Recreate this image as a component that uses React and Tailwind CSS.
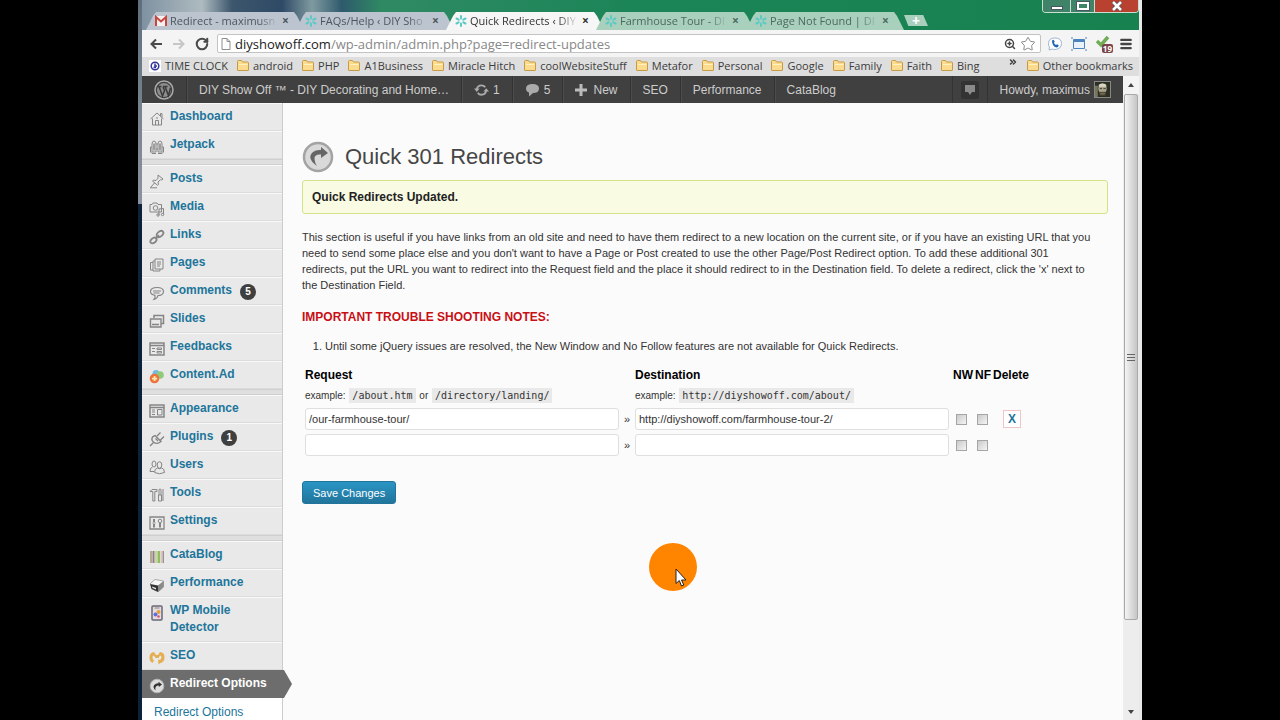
import React, { useState } from "react";
import { ChevronsRight, Menu, RotateCw, Star, ZoomIn } from "lucide-react";

const TABS = [
  { title: "Redirect - maximusn", icon: "gmail" },
  { title: "FAQs/Help ‹ DIY Sho", icon: "flower" },
  { title: "Quick Redirects ‹ DIY", icon: "flower", active: true },
  { title: "Farmhouse Tour - DI", icon: "flower", green: true },
  { title: "Page Not Found | DI", icon: "flower", green: true },
];

const BOOKMARKS = [
  "android", "PHP", "A1Business", "Miracle Hitch", "coolWebsiteStuff",
  "Metafor", "Personal", "Google", "Family", "Faith", "Bing",
];

const MENU = [
  [
    { label: "Dashboard", icon: "home" },
    { label: "Jetpack", icon: "jetpack" },
  ],
  [
    { label: "Posts", icon: "pin" },
    { label: "Media", icon: "media" },
    { label: "Links", icon: "link" },
    { label: "Pages", icon: "pages" },
    { label: "Comments", icon: "comment", count: 5 },
    { label: "Slides", icon: "slides" },
    { label: "Feedbacks", icon: "form" },
    { label: "Content.Ad", icon: "contentad" },
  ],
  [
    { label: "Appearance", icon: "appearance" },
    { label: "Plugins", icon: "plug", count: 1 },
    { label: "Users", icon: "users" },
    { label: "Tools", icon: "tools" },
    { label: "Settings", icon: "settings" },
  ],
  [
    { label: "CataBlog", icon: "catablog" },
    { label: "Performance", icon: "cube" },
    { label: "WP Mobile Detector", icon: "mobile" },
    { label: "SEO", icon: "seo" },
    { label: "Redirect Options", icon: "redirect", current: true },
  ],
];

const ICONS = {
  home: (
    <>
      <path d="M1.500 8 8 2l6.500 6M3.500 7.500V14h9V7.500M11.500 5V2.500h1.500V6.500" />
      <path d="M6.500 14v-4.500h3V14M7 7h2" />
    </>
  ),
  jetpack: (
    <>
      <path d="M3 13V5q0-3 2-3t2 3v8zM9 13V5q0-3 2-3t2 3v8zM7 5h2M7 10h2" />
      <path d="M3 8H1.500v5L3 14.500h4M13 8h1.500v5L13 14.500H9" />
      <path d="M5 4.500v7M11 4.500v7" strokeWidth="1.500" />
    </>
  ),
  pin: (
    <>
      <path d="m9 2 5 4-1.500 1-1-.3-2.500 2.300.5 2.500-1 .8-5-4.300 1-.8 2.500.3L9 5.300z" />
      <path d="M5.500 10 1.500 14.500M1 14.800h7" />
    </>
  ),
  media: (
    <>
      <path d="M1 3.500h2l1-1.500h4l1 1.500h3.500V11H1z" />
      <circle cx="6.500" cy="7" r="2.300" />
      <path d="M10 14V8l4.500-.5v6" />
      <circle cx="9" cy="14" r="1.200" />
      <circle cx="13.500" cy="13.500" r="1.200" />
    </>
  ),
  link: (
    <>
      <ellipse cx="11" cy="5" rx="3.800" ry="2.500" transform="rotate(-40 11 5)" strokeWidth="1.800" />
      <ellipse cx="4.500" cy="11.500" rx="3.500" ry="2.300" transform="rotate(-40 4.500 11.500)" strokeWidth="1.800" />
      <path d="m6 10 4-4" strokeWidth="1.500" />
    </>
  ),
  pages: (
    <>
      <path d="M6 2h8v10H6z" />
      <path d="M6 4H4v10h7v-2M4 5.500H1.500V13H4M8 5h4M8 7h4M8 9h3" />
    </>
  ),
  comment: (
    <>
      <path d="M8 2.500c4 0 6.500 1.600 6.500 4s-2.500 4-5.500 4q-.5 3-4 3.800 1.500-1.800 1-4C3 9.800 1.500 8.500 1.500 6.500c0-2.400 2.500-4 6.500-4z" strokeWidth="1.200" />
      <path d="M4 6h8M4.500 8h6" />
    </>
  ),
  slides: (
    <>
      <path d="M5 5V2.500h9.500v8H12" strokeWidth="1.500" />
      <path d="M1.500 6H12v8H1.500zM3 11.500h7" strokeWidth="1.400" />
    </>
  ),
  form: (
    <>
      <path d="M1 2h14v12H1zM1 4.500h14" strokeWidth="1.500" />
      <path d="M3 7.500h3M3 10.500h3M8 7h4.500v1.500H8zM8 10.500h4.500v1.500H8z" />
    </>
  ),
  contentad: (
    <g stroke="none">
      <circle cx="7" cy="4.500" r="3.500" fill="#6fbbe6" />
      <circle cx="11" cy="6" r="3.800" fill="#8fca7b" />
      <circle cx="5.500" cy="9.500" r="4.800" fill="#ee7240" />
      <path d="M4.700 7h1.800v1.700h1.700v1.700H6.500V12H4.700v-1.600H3V8.700h1.700z" fill="#ffe9a8" />
    </g>
  ),
  appearance: (
    <>
      <path d="M1 2h14v12H1zM1 4.500h14" strokeWidth="1.500" />
      <path d="M8.500 6.500h4.500v5.500H8.500zM3 7h3M3 9h3M3 11.500h3" />
    </>
  ),
  plug: (
    <>
      <path d="m6 4.500 6 6-1.500 1q-3 2-6-.5t-.5-5.500zM8 5l3.500-3.500M11.500 9 15 5.500" strokeWidth="1.400" />
      <path d="M4.500 11.500 1 15M6.500 7.500l2.500 2.500" strokeWidth="1.400" />
    </>
  ),
  users: (
    <>
      <ellipse cx="5" cy="5" rx="2" ry="3" />
      <path d="M3.500 8Q1 8.500 1 12.500h4" />
      <ellipse cx="10.500" cy="6" rx="2.300" ry="3.300" />
      <path d="M5.500 13.500q0-4 3-4.500 2 1.500 4 0 3 .5 3 4.500-5 2.500-10 0z" />
    </>
  ),
  tools: (
    <>
      <path d="M1 4.500 3 2.500h5v2H5.800V14H3.800V4.500zM10 8V3q0-1 1-1t1 1v5M9.500 8h3v6h-3zM14 2v12" />
    </>
  ),
  settings: (
    <>
      <path d="M1 2h14v12H1z" strokeWidth="1.300" />
      <path d="M5 4v3M5 9v3.500M11 8v4.500" strokeWidth="2" />
      <path d="M3.500 8h3" />
      <circle cx="11" cy="6" r="1.800" />
    </>
  ),
  catablog: (
    <g stroke="none">
      <path d="M1 2h2v12H1z" fill="#b8a98c" />
      <path d="M3.500 2h2v12h-2z" fill="#8d7d8d" />
      <path d="M6 2h2v12H6z" fill="#cdd59c" />
      <path d="M8.500 2H11v12H8.500z" fill="#8fbe5e" />
      <path d="M11.500 2h1.500v12h-1.500z" fill="#d8c7bb" />
      <path d="M13.500 2H15v12h-1.500z" fill="#a38f8f" />
    </g>
  ),
  cube: (
    <g stroke="none">
      <path d="M1 7 6 2.500 14.500 4 9 8.500z" fill="#f8f8f8" />
      <path d="M1 7 9 8.500V15L2.500 12z" fill="#333" />
      <path d="M9 8.500 14.500 4v6L9 15z" fill="#8a8a8a" />
      <path d="M3 9.500 7 11v1.500L3.500 11z" fill="#eee" />
      <path d="M1 7 6 2.500 14.500 4v6L9 15" fill="none" stroke="#888" strokeWidth=".7" />
    </g>
  ),
  mobile: (
    <>
      <rect x="3" y="1" width="10" height="14" rx="1" fill="#e8dbe0" stroke="#686878" strokeWidth="1.500" />
      <path d="M5.500 3h5" />
      <circle cx="9.500" cy="7" r="2" fill="#e2a33f" stroke="none" />
      <circle cx="6.500" cy="9.500" r="2" fill="#5c6ee0" stroke="none" />
      <circle cx="9.500" cy="11.500" r="1.300" fill="#d05c68" stroke="none" />
    </>
  ),
  seo: (
    <path
      d="M5 2Q.5 2.500.5 7.500q0 4 3 5.500l1.500-2.500Q3.200 9 3.500 7q.2-1.500 1.500-1.500l1.500 2.500h3L11 5.500q1.500 0 1.500 1.800 0 2-2 2.700L9 9.500l.5 5 1.500-1.300q4.500-1 4.500-6Q15.500 2.500 11 2L9 5H7z"
      fill="#e5ae52"
      stroke="none"
    />
  ),
  redirect: (
    <>
      <circle cx="8" cy="8" r="6.800" fill="#ddd" stroke="#b8b8b8" />
      <path d="M6.500 12.500Q2.500 8 6.500 6q1.500-.8 3-.6V3.800L13 6.500 9.800 9V7.500Q5.500 7.500 6.500 12.500z" fill="#333" stroke="none" />
    </>
  ),
};

function MenuIcon({ name }) {
  return (
    <svg viewBox="0 0 16 16" className="mt-[3px] -mb-0.5 h-4 w-4 shrink-0" fill="none" stroke="#858585" strokeWidth="1">
      {ICONS[name]}
    </svg>
  );
}

function FavIcon({ name }) {
  if (name === "gmail") {
    return (
      <svg viewBox="0 0 14 12" className="h-3 w-3.5 shrink-0">
        <path d="M1 1h12v10H1z" fill="#f4f1f1" />
        <path d="M2 11V2l5 4.500L12 2v9" fill="none" stroke="#c9453f" strokeWidth="2" />
      </svg>
    );
  }
  return (
    <svg viewBox="0 0 14 14" className="h-3.5 w-3.5 shrink-0" stroke="#5cc9c4" strokeWidth="2" strokeLinecap="round">
      <path d="M7 2v2.500M7 9.500V12M2.500 4.500l2.200 1.200M9.300 8.300l2.200 1.200M2.500 9.500l2.200-1.200M9.300 5.700l2.200-1.200" />
    </svg>
  );
}

function Folder() {
  return (
    <svg viewBox="0 0 12 11" className="h-[11px] w-3 shrink-0" stroke="#c79a45" fill="#fbdc8f">
      <path d="M.5 10V1.500Q.5.500 1.500.5h3l1 1.500h5q1 0 1 1V10q0 .5-.5.500H1Q.5 10.500.5 10z" />
      <path d="M2 4.500h8.500" stroke="#fff0c0" />
    </svg>
  );
}

function Tab({ tab }) {
  let color = "bg-[#bcc5cf] text-[#4d555c]";
  if (tab.green) color = "bg-[#a9cfbd] text-[#4c6a60]";
  if (tab.active) color = "bg-[#f6f6f6] text-[#333]";
  return (
    <div
      className={`flex h-[18px] w-[158px] shrink-0 items-center pl-2 pr-3 -mr-2 [clip-path:polygon(0_100%,7px_4px,10px_0,148px_0,151px_4px,100%_100%)] ${color}`}
    >
      <FavIcon name={tab.icon} />
      <button className="ml-0.5 w-[108px] whitespace-nowrap text-left text-[11px] leading-[18px] [mask-image:linear-gradient(to_right,#000_82%,transparent)]">
        {tab.title}
      </button>
      <button aria-label="Close tab" className="ml-1 text-xs font-bold leading-4">×</button>
    </div>
  );
}

function WindowControls() {
  return (
    <div className="ml-auto flex h-[13px] shrink-0 self-start overflow-hidden rounded-b border border-t-0 border-[#c9ddd3]">
      <button aria-label="Minimize" className="flex w-7 items-center justify-center border-r border-[#c9ddd3] bg-[#3f8468]">
        <span className="mt-1 h-1 w-3 border border-gray-600 bg-white" />
      </button>
      <button aria-label="Maximize" className="flex w-6 items-center justify-center border-r border-[#c9ddd3] bg-[#3f8468]">
        <span className="h-2 w-3 border-2 border-white outline outline-gray-600" />
      </button>
      <button aria-label="Close window" className="flex w-[43px] items-center justify-center bg-[#b9412f]">
        <svg viewBox="0 0 12 10" className="h-2.5 w-3">
          <path d="m2 1 8 8M10 1 2 9" stroke="#555" strokeWidth="4" />
          <path d="m2 1 8 8M10 1 2 9" stroke="#fff" strokeWidth="2.500" />
        </svg>
      </button>
    </div>
  );
}

function TabStrip() {
  return (
    <div className="flex h-[30px] shrink-0 items-end overflow-hidden bg-[linear-gradient(90deg,#7f92a2_0,#aebbc0_60px,#3c566c_90px,#2f4a66_140px,#7f9aa0_170px,#2e5a6c_200px,#2f8a63_240px,#1c8558_480px,#17814f_100%)] pl-1">
      {TABS.map((tab) => (
        <Tab key={tab.title} tab={tab} />
      ))}
      <button
        aria-label="New tab"
        className="mb-1 ml-2 h-[11px] w-6 bg-[#a9cfbd] text-sm font-bold leading-[10px] text-white [clip-path:polygon(0_0,80%_0,100%_100%,18%_100%)]"
      >
        +
      </button>
      <WindowControls />
    </div>
  );
}

function Toolbar() {
  return (
    <div className="flex h-[27px] shrink-0 items-center bg-[#f4f4f4] pl-2 pr-1.5">
      <button aria-label="Back">
        <svg viewBox="0 0 12 12" className="h-3 w-3" fill="none" stroke="#4a4a4a" strokeWidth="2">
          <path d="M12 6H1.500M6 1.500 1.500 6 6 10.500" />
        </svg>
      </button>
      <button aria-label="Forward" className="ml-[11px]">
        <svg viewBox="0 0 12 12" className="h-3 w-3" fill="none" stroke="#c6c6c6" strokeWidth="2">
          <path d="M0 6h10.500M6 1.500 10.500 6 6 10.500" />
        </svg>
      </button>
      <button aria-label="Reload" className="ml-2.5">
        <RotateCw className="h-3.5 w-3.5 text-[#4a4a4a]" strokeWidth={3.5} />
      </button>
      <div className="ml-2 flex h-[19px] min-w-0 flex-1 items-center rounded-xs border border-[#c3c3c3] bg-white pl-[3px] pr-1">
        <svg viewBox="0 0 10 12" className="h-3 w-2.5 shrink-0" fill="none" stroke="#8d8d8d">
          <path d="M1 .5h5L9 3.500v8H1zM6 .5v3h3" />
        </svg>
        <div className="ml-1 flex-1 whitespace-nowrap text-[13px] leading-4 text-[#888]">
          <span className="text-[#222]">diyshowoff.com</span>/wp-admin/admin.php?page=redirect-updates
        </div>
        <ZoomIn className="h-3 w-3 text-[#444]" strokeWidth={3} />
        <Star className="ml-1 h-4 w-4 text-[#888]" strokeWidth={1.5} />
      </div>
      <button aria-label="Call" className="ml-1.5">
        <svg viewBox="0 0 16 14" className="h-3.5 w-4">
          <path d="M8 1q6.500 0 6.500 5.500T8 12.500q-1.500 0-2.500-.5L2 13l.5-3Q1 8.500 1.500 6.500 1.500 1 8 1z" fill="#fff" stroke="#9fb8d2" />
          <path d="m5 3.500 1.500-.8 1.300 2-.9 1q.5 1.500 2.100 2.200l1-.7 1.800 1.300q-.7 2-2.300 2Q5 9.500 5 3.500z" fill="#2264b5" />
        </svg>
      </button>
      <button aria-label="Capture" className="ml-2">
        <svg viewBox="0 0 16 14" className="h-3.5 w-4" fill="none" stroke="#4c83bd">
          <path d="M2.500 2.500h11v9h-11z" fill="#e9f1fa" />
          <path d="M2.500 4h11" strokeWidth="2" />
          <path d="M0 1h2M14 1h2M0 13h2M14 13h2" />
        </svg>
      </button>
      <button aria-label="Checker, 19 items" className="relative ml-2 h-[18px] w-[18px]">
        <svg viewBox="0 0 18 18" className="h-[18px] w-[18px]">
          <path d="m2 6 4 4 7-8" fill="none" stroke="#72ad55" strokeWidth="3.500" />
        </svg>
        <span className="absolute bottom-0 right-0 rounded-xs bg-[#7a4548] px-px text-[8px] font-bold leading-[9px] text-white">19</span>
      </button>
      <button aria-label="Menu" className="ml-1.5">
        <Menu className="h-3.5 w-3.5 text-[#444]" strokeWidth={4} />
      </button>
    </div>
  );
}

function BookmarksBar() {
  return (
    <nav className="flex h-[19px] shrink-0 items-center gap-[9px] whitespace-nowrap bg-[#dedede] pb-0.5 pl-[7px] pr-1.5 text-[11px] leading-4 text-[#3c3c3c]">
      <a href="#clock" className="flex items-center gap-1">
        <span className="flex h-3 w-3 items-center justify-center bg-white">
          <svg viewBox="0 0 10 10" className="h-2.5 w-2.5" fill="none" stroke="#35379c" strokeWidth="1.500">
            <circle cx="5" cy="5" r="3.800" />
            <path d="M5 2.500V5h2M3.500 6.500H6" />
          </svg>
        </span>
        TIME CLOCK
      </a>
      {BOOKMARKS.map((name) => (
        <a key={name} href="#bookmark" className="flex items-center gap-1">
          <Folder />
          {name}
        </a>
      ))}
      <button aria-label="More bookmarks" className="ml-auto self-start">
        <ChevronsRight className="h-2.5 w-2.5" strokeWidth={3.5} />
      </button>
      <a href="#other" className="flex items-center gap-1">
        <Folder />
        Other bookmarks
      </a>
    </nav>
  );
}

function AdminBar() {
  const cell = "flex h-full items-center px-3 border-r border-[#333] shadow-[1px_0_0_#4c4c4c]";
  return (
    <header className="flex h-[27px] shrink-0 items-center whitespace-nowrap bg-[#404040] text-xs leading-4 text-[#ccc]">
      <a href="#wp" aria-label="WordPress" className={cell}>
        <svg viewBox="0 0 20 20" className="h-5 w-5" fill="none" stroke="#aaa">
          <circle cx="10" cy="10" r="9" strokeWidth="1.500" />
          <circle cx="10" cy="10" r="7" fill="#8d8d8d" stroke="none" />
          <path d="M3.500 6.500h4M9 6.500h4.500M5.200 7l3.300 9 2-5.500L9 7M11.200 7l3.300 8.500L16.500 8" stroke="#3a3a3a" strokeWidth="1.500" />
        </svg>
      </a>
      <a href="#site" className={cell}>DIY Show Off ™ - DIY Decorating and Home…</a>
      <a href="#updates" className={`${cell} gap-1`}>
        <svg viewBox="0 0 16 14" className="h-3.5 w-[15px]" fill="none" stroke="#aaa" strokeWidth="2">
          <path d="M3 6q.8-4 5-4 2.500 0 4 2M13 8q-.8 4-5 4-2.500 0-4-2" />
          <path d="M0 5.500h6L3 9zM16 8.500h-6L13 5z" fill="#aaa" stroke="none" />
        </svg>
        1
      </a>
      <a href="#comments" className={`${cell} gap-1`}>
        <svg viewBox="0 0 15 14" className="h-3.5 w-[15px]" fill="#aaa">
          <path d="M7.500 1Q14 1 14 5.500T8 10L4 13.500V9.500Q1 8.500 1 5.500 1 1 7.500 1z" />
        </svg>
        5
      </a>
      <a href="#new" className={`${cell} gap-1.5`}>
        <svg viewBox="0 0 12 12" className="h-3 w-3" stroke="#bbb" strokeWidth="3">
          <path d="M6 0v12M0 6h12" />
        </svg>
        New
      </a>
      <a href="#seo" className={cell}>SEO</a>
      <a href="#performance" className={cell}>Performance</a>
      <a href="#catablog" className="px-3">CataBlog</a>
      <a href="#notes" aria-label="Notifications" className="ml-auto flex h-full items-center border-x border-[#333] px-2">
        <span className="flex h-[18px] w-[18px] items-center justify-center rounded-xs bg-[#333]">
          <svg viewBox="0 0 12 12" className="h-3 w-3" fill="#8a8a8a">
            <path d="M1 1h10v7H8l-2 3-2-3H1z" />
          </svg>
        </span>
      </a>
      <a href="#profile" className="flex items-center gap-1 px-3">
        Howdy, maximus
        <svg viewBox="0 0 16 16" className="h-[17px] w-[17px] border border-[#888]">
          <path d="M0 0h16v16H0z" fill="#2d2f22" />
          <path d="M0 4h3v12H0z" fill="#74775e" />
          <ellipse cx="8" cy="7" rx="4.500" ry="5.500" fill="#aaa48f" />
          <path d="M4 3q4-3 8 0v2H4z" fill="#d9d7c8" />
          <path d="M5 7h2.500M9 7h2.500M5 11h6v3H5z" stroke="#45412f" fill="#716a55" />
        </svg>
      </a>
    </header>
  );
}

function MenuItem({ item }) {
  const look = item.current
    ? "bg-[#6d6d6d] border-y-[#6d6d6d] text-white"
    : "border-t-[#f9f9f9] border-b-[#dcdcdc] text-[#21759b]";
  return (
    <a href="#menu" className={`relative flex gap-[5px] border-y pt-1 pb-[5px] pl-[7px] text-xs font-bold leading-[17px] ${look}`}>
      <MenuIcon name={item.icon} />
      <span className={item.icon === "mobile" ? "max-w-20" : ""}>{item.label}</span>
      {item.count && (
        <span className="ml-[3px] mt-0.5 -mb-1 h-4 w-4 rounded-full bg-[#3f3f3f] text-center text-[10px] leading-4 text-white">
          {item.count}
        </span>
      )}
      {item.current && (
        <span className="absolute -right-2.5 -top-px -bottom-px z-10 w-2.5 bg-[#6d6d6d] [clip-path:polygon(0_0,20%_0,100%_50%,20%_100%,0_100%)]" />
      )}
    </a>
  );
}

function Sidebar() {
  return (
    <aside className="relative z-10 w-[141px] shrink-0 border-r border-[#ccc] bg-[#e9e9e9]">
      {MENU.map((group, i) => (
        <React.Fragment key={i}>
          {i > 0 && <div className="h-1.5 border-y border-[#cfcfcf] bg-[#dfdfdf]" />}
          {group.map((item) => (
            <MenuItem key={item.label} item={item} />
          ))}
        </React.Fragment>
      ))}
      <div className="bg-white pb-1 pl-3 pt-1.5 text-xs leading-4">
        <a href="#redirect-options" className="text-[#21759b]">Redirect Options</a>
      </div>
    </aside>
  );
}

function TextField({ label, value, onChange }) {
  return (
    <input
      type="text"
      aria-label={label}
      value={value}
      onChange={onChange}
      className="block h-[22px] w-full rounded-[3px] border border-[#dfdfdf] bg-white px-[3px] text-[11px] leading-4 text-[#333]"
    />
  );
}

function Check({ label }) {
  return (
    <input
      type="checkbox"
      aria-label={label}
      className="block h-[11px] w-[11px] appearance-none border border-[#a5a5a5] bg-linear-to-br from-[#c9c9c9] to-[#f5f5f5]"
    />
  );
}

function Code({ children }) {
  return <code className="mx-px bg-[#e9e9e9] px-[3px] py-0.5 font-['DejaVu_Sans_Mono',monospace]">{children}</code>;
}

function RedirectTable() {
  const [rows, setRows] = useState([
    { request: "/our-farmhouse-tour/", destination: "http://diyshowoff.com/farmhouse-tour-2/" },
    { request: "", destination: "" },
  ]);

  const update = (index, key, value) =>
    setRows(rows.map((row, i) => (i === index ? { ...row, [key]: value } : row)));

  return (
    <table className="mt-[13px] text-left text-[11px] leading-4">
      <thead>
        <tr className="text-xs leading-4 text-black">
          <th className="w-80 px-[3px] pb-[5px]">Request</th>
          <th className="w-[10px]" />
          <th className="w-80 px-[3px] pb-[5px]">Destination</th>
          <th className="w-5 pb-[5px] pl-px">NW</th>
          <th className="w-5 pb-[5px] pl-0.5">NF</th>
          <th className="w-10 pb-[5px]">Delete</th>
        </tr>
        <tr className="text-[10px]">
          <td className="px-[3px] pb-0.5">
            example: <Code>/about.htm</Code> or <Code>/directory/landing/</Code>
          </td>
          <td />
          <td className="px-[3px] pb-0.5" colSpan={4}>
            example: <Code>http://diyshowoff.com/about/</Code>
          </td>
        </tr>
      </thead>
      <tbody>
        {rows.map((row, i) => (
          <tr key={i}>
            <td className="px-[3px] py-0.5">
              <TextField label="Request" value={row.request} onChange={(e) => update(i, "request", e.target.value)} />
            </td>
            <td className="text-center">»</td>
            <td className="px-[3px] py-0.5">
              <TextField label="Destination" value={row.destination} onChange={(e) => update(i, "destination", e.target.value)} />
            </td>
            <td className="pl-1"><Check label="New window" /></td>
            <td className="pl-1"><Check label="No follow" /></td>
            <td className="pl-[10px]">
              {row.request && (
                <button
                  onClick={() => setRows(rows.filter((_, n) => n !== i))}
                  className="block h-[18px] w-[18px] border border-[#efc5c5] bg-white text-center text-xs font-bold leading-4 text-[#21759b]"
                >
                  X
                </button>
              )}
            </td>
          </tr>
        ))}
      </tbody>
    </table>
  );
}

function Pointer() {
  return (
    <div className="pointer-events-none absolute left-[366px] top-[440px] h-12 w-12 rounded-full bg-[#ff8400]">
      <svg viewBox="0 0 12 19" className="absolute left-[26px] top-[25px] h-[19px] w-3">
        <path d="M1 1v14.500l3.300-3L6.500 18l2.300-1-2.300-5H11z" fill="#fff" stroke="#222" />
      </svg>
    </div>
  );
}

function Content() {
  return (
    <main className="relative min-w-0 flex-1 overflow-hidden bg-[#fcfbfc] pl-[19px] pr-[15px] pt-[38px] text-[11px] leading-4 text-[#333]">
      <div className="flex items-center gap-[11px]">
        <svg viewBox="0 0 32 32" className="h-8 w-8">
          <circle cx="16" cy="16" r="14" fill="#d9d9d9" stroke="#a3a3a3" strokeWidth="2.500" />
          <path d="M15 25Q4 17 11 11q3-2.500 8-2V6l7 6-7 5v-3.500Q12 13 12.500 18q.3 4 2.500 7z" fill="#666" />
        </svg>
        <h1 className="text-[22px] leading-8 text-[#464646]">Quick 301 Redirects</h1>
      </div>
      <div className="mt-[7px] rounded-[3px] border border-[#d5e28a] bg-[#f9fbe3] px-[9px] py-2 text-xs font-bold leading-4 text-[#222]">
        Quick Redirects Updated.
      </div>
      <p className="mt-[15px]">
        This section is useful if you have links from an old site and need to have them redirect to a new location on
        the current site, or if you have an existing URL that you
        <br />
        need to send some place else and you don't want to have a Page or Post created to use the other Page/Post
        Redirect option. To add these additional 301
        <br />
        redirects, put the URL you want to redirect into the Request field and the place it should redirect to in the
        Destination field. To delete a redirect, click the 'x' next to
        <br />
        the Destination Field.
      </p>
      <h2 className="mt-4 text-xs font-bold leading-4 text-[#c80f14]">IMPORTANT TROUBLE SHOOTING NOTES:</h2>
      <ol className="mt-[13px] list-decimal pl-[23px]">
        <li>Until some jQuery issues are resolved, the New Window and No Follow features are not available for Quick Redirects.</li>
      </ol>
      <RedirectTable />
      <button className="mt-[23px] h-[23px] rounded-[3px] border border-[#21759b] bg-linear-to-b from-[#2a95c5] to-[#21759b] px-2.5 leading-4 text-white">
        Save Changes
      </button>
      <Pointer />
    </main>
  );
}

function Scrollbar() {
  return (
    <div aria-hidden="true" className="flex w-4 shrink-0 flex-col items-center bg-[#ededed]">
      <div className="flex h-[18px] w-full items-center justify-center bg-[#f4f4f4]">
        <span className="border-x-3 border-b-4 border-x-transparent border-b-[#444]" />
      </div>
      <div className="flex w-3.5 flex-[526] flex-col items-center justify-center gap-0.5 rounded-xs border border-[#a9a9a9] bg-linear-to-r from-[#f3f3f3] to-[#c6c6c6]">
        <span className="h-px w-2 bg-[#666]" />
        <span className="h-px w-2 bg-[#666]" />
        <span className="h-px w-2 bg-[#666]" />
      </div>
      <div className="flex w-full flex-[94] items-end justify-center pb-1.5">
        <span className="border-x-3 border-t-4 border-x-transparent border-t-[#444]" />
      </div>
    </div>
  );
}

export default function App() {
  return (
    <div className="h-screen overflow-hidden bg-black px-[138px] font-['Liberation_Sans',Arial,sans-serif]">
      <div className="flex h-full bg-[#f3f3f3]">
        <div className="flex w-1 shrink-0 flex-col">
          <div className="h-[204px] bg-linear-to-b from-[#5f6e7c] to-[#8b949e]" />
          <div className="flex-1 bg-[#0d2138]" />
        </div>
        <div className="flex min-w-0 flex-1 flex-col">
          <div className="font-['Open_Sans','Noto_Sans',sans-serif]">
            <TabStrip />
            <Toolbar />
            <BookmarksBar />
          </div>
          <div className="flex min-h-0 flex-1">
            <div className="flex min-w-0 flex-1 flex-col">
              <AdminBar />
              <div className="flex min-h-0 flex-1">
                <Sidebar />
                <Content />
              </div>
            </div>
            <Scrollbar />
          </div>
        </div>
        <div className="w-[3px] shrink-0 bg-[#e9e9e9]" />
      </div>
    </div>
  );
}
